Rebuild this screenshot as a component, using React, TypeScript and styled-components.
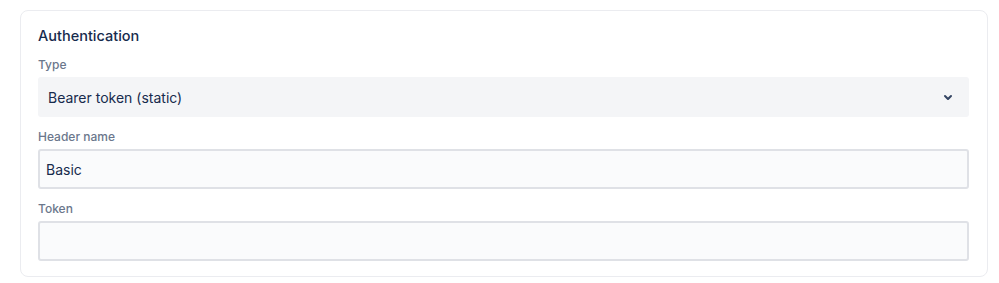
import React from "react";
import styled, { createGlobalStyle } from "styled-components";

const GlobalStyle = createGlobalStyle`
  body {
    margin: 0;
    background: #ffffff;
    font-family: Inter, "Noto Sans", sans-serif;
  }
`;

const Page = styled.div`
  padding: 10px 11px 6px 20px;
`;

const Card = styled.section`
  border: 1px solid #ebecf0;
  border-radius: 8px;
  padding: 15px 18px 15px 17px;
  display: flex;
  flex-direction: column;
`;

const Title = styled.h3`
  margin: 0 0 11px;
  font-size: 14.5px;
  line-height: 20px;
  font-weight: 500;
  color: #172b4d;
`;

const Field = styled.div<{ $last?: boolean }>`
  display: flex;
  flex-direction: column;
  margin-bottom: ${(p) => (p.$last ? "0" : "12px")};
`;

const Label = styled.label`
  font-size: 12px;
  line-height: 16px;
  font-weight: 500;
  color: #6b778c;
  margin-bottom: 4px;
`;

const Select = styled.div`
  height: 40px;
  box-sizing: border-box;
  background: #f4f5f7;
  border-radius: 3px;
  display: flex;
  align-items: center;
  justify-content: space-between;
  padding: 0 9px 0 10px;
  font-size: 14px;
  color: #172b4d;
`;

const Input = styled.div`
  height: 40px;
  box-sizing: border-box;
  background: #fafbfc;
  border: 2px solid #dfe1e6;
  border-radius: 3px;
  display: flex;
  align-items: center;
  padding: 0 6px;
  font-size: 14px;
  color: #172b4d;
`;

const Chevron = () => (
  <svg width="24" height="24" viewBox="0 0 24 24">
    <path
      fill="#344563"
      d="M8.292 10.293a1.009 1.009 0 000 1.419l2.939 2.965c.218.215.5.322.779.322s.556-.107.769-.322l2.93-2.955a1.01 1.01 0 000-1.419.987.987 0 00-1.406 0l-2.298 2.317-2.307-2.327a.99.99 0 00-1.406 0z"
    />
  </svg>
);

export default function App() {
  return (
    <>
      <GlobalStyle />
      <Page>
        <Card>
          <Title>Authentication</Title>
          <Field>
            <Label>Type</Label>
            <Select>
              <span>Bearer token (static)</span>
              <Chevron />
            </Select>
          </Field>
          <Field>
            <Label>Header name</Label>
            <Input>Basic</Input>
          </Field>
          <Field $last>
            <Label>Token</Label>
            <Input />
          </Field>
        </Card>
      </Page>
    </>
  );
}
